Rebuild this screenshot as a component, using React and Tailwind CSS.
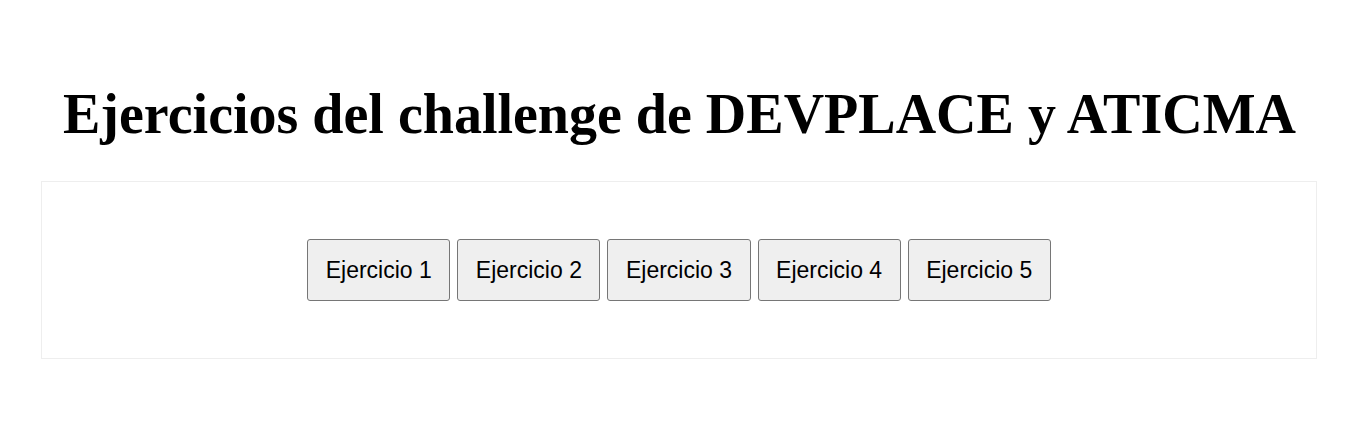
export default function App() {
  const ejercicios = [1, 2, 3, 4, 5];

  return (
    <div className="min-h-screen bg-white pt-[82px]">
      <h1 className="text-center text-[56px] font-bold leading-[64px] text-black font-['Liberation_Serif',serif]">
        Ejercicios del challenge de DEVPLACE y ATICMA
      </h1>

      <div className="ml-[41px] mt-[35px] flex h-[178px] w-[1276px] items-center justify-center gap-[7px] border border-[#eeeeee]">
        {ejercicios.map((n) => (
          <button
            key={n}
            className="h-[62px] rounded-[3px] border border-[#767676] bg-[#efefef] px-[17.5px] text-[23px] text-black font-['Liberation_Sans',sans-serif]"
          >
            Ejercicio {n}
          </button>
        ))}
      </div>
    </div>
  );
}
